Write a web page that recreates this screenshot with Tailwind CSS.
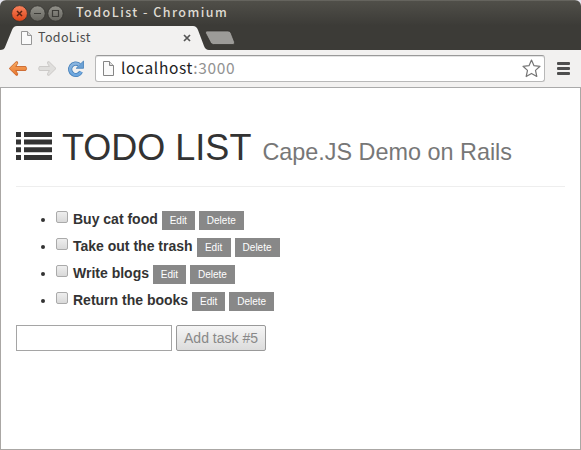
<!DOCTYPE html>
<html lang="en">
<head>
<meta charset="utf-8">
<title>TodoList</title>
<script src="https://cdn.jsdelivr.net/npm/@tailwindcss/browser@4"></script>
</head>
<body class="w-[581px] h-[450px] overflow-hidden bg-[#e4e4ee]">
<div class="relative flex flex-col w-[581px] h-[450px] overflow-hidden rounded-t-[6px] bg-white">
  <header class="flex flex-col h-[50px] shrink-0 border-t border-[#65645e] bg-linear-to-b from-[#504f49] to-[#3c3b37] to-50%">
    <div class="flex items-center h-[25px] pl-[11px]">
      <svg class="w-[54px] h-[18px] shrink-0" viewBox="0 0 54 18" fill="none">
        <defs>
          <linearGradient id="red" x2="0" y2="1"><stop stop-color="#f8835d"/><stop offset="1" stop-color="#dd4418"/></linearGradient>
          <linearGradient id="gry" x2="0" y2="1"><stop stop-color="#92918a"/><stop offset="1" stop-color="#66655f"/></linearGradient>
        </defs>
        <circle cx="8.500" cy="8.500" r="7.900" fill="url(#red)" stroke="#33322e" stroke-width=".8"/>
        <circle cx="26.500" cy="8.500" r="7.700" fill="url(#gry)" stroke="#33322e" stroke-width=".8"/>
        <circle cx="44.500" cy="8.500" r="7.700" fill="url(#gry)" stroke="#33322e" stroke-width=".8"/>
        <path d="M6 6l5 5M11 6l-5 5" stroke="#5a2413" stroke-width="1.500"/>
        <path d="M23 8.500h7M41.500 5.500h6v6h-6z" stroke="#3c3b37" stroke-width="1.200"/>
      </svg>
      <span class="ml-[11px] -mt-[3px] whitespace-nowrap text-[12.5px] leading-[18px] tracking-[1.45px] font-medium text-[#dfdbd2] font-['Noto_Sans_CJK_JP',sans-serif]">TodoList - Chromium</span>
    </div>
    <div class="flex h-[24px]">
      <div class="relative w-[209px] h-[24px]">
        <svg class="absolute inset-0 w-[209px] h-[24px]" viewBox="0 0 209 24"><path d="M0 24C3 24 4.500 23 5.500 20L12 4Q13.500 0 17 0H193Q196.500 0 198 4L204 20Q205.500 24 209 24Z" fill="#f2f1f0"/></svg>
        <div class="relative flex items-center h-[24px] pl-[20px]">
          <svg class="w-[13px] h-[15px]" viewBox="0 0 13 15"><path d="M1.500 .5h6l4 4v9h-10z" fill="#fafafa" stroke="#969696"/><path d="M7.500 .5v4h4" fill="#ddd" stroke="#969696"/></svg>
          <span class="ml-[5px] -mt-[3px] w-[140px] whitespace-nowrap text-[12.5px] leading-[18px] tracking-[.35px] text-[#4c4c4c] font-['Noto_Sans_CJK_JP',sans-serif]">TodoList</span>
          <svg class="ml-[5px] w-[8px] h-[8px]" viewBox="0 0 8 8"><path d="M1 1l6 6M7 1L1 7" stroke="#555" stroke-width="1.700"/></svg>
        </div>
      </div>
      <svg class="-ml-[5px] mt-[4px] w-[32px] h-[16px]" viewBox="0 0 32 16"><path d="M3 1H24Q26 1 27 3L30.500 12Q31 14.500 29 14.500H9.500Q7.500 14.500 6.500 12.500L1.500 3Q1 1 3 1Z" fill="#9c9b98" stroke="#302f2b" stroke-width=".7"/></svg>
    </div>
  </header>
  <nav class="flex items-center h-[38px] shrink-0 bg-[#f2f1f0] border-b border-[#aaa] pl-[8px]">
    <svg class="w-[78px] h-[20px]" viewBox="0 0 78 20" fill="none">
      <defs>
        <linearGradient id="org" x2="0" y2="1"><stop stop-color="#f8ac63"/><stop offset="1" stop-color="#e7752c"/></linearGradient>
        <linearGradient id="blu" x2="0" y2="1"><stop stop-color="#8ab5df"/><stop offset="1" stop-color="#6ba6df"/></linearGradient>
      </defs>
      <path d="M1.200 9.500L8 2.800Q10 2 9.700 4.300L7.800 7.500H17.800Q19.300 9.500 17.800 11.500H7.800L9.700 14.700Q10 17 8 16.200Z" fill="url(#org)" stroke="#c9652b" stroke-width=".9" stroke-linejoin="round"/>
      <path d="M48 9.500L41.200 2.800Q39.200 2 39.500 4.300L41.400 7.500H31.400Q29.900 9.500 31.400 11.500H41.400L39.500 14.700Q39.200 17 41.200 16.200Z" fill="#dfdedc" stroke="#c8c6c4" stroke-width=".9" stroke-linejoin="round"/>
      <path d="M73 12.700A5.700 5.700 0 1 1 71.500 5.900" stroke="#4680b9" stroke-width="4.200"/>
      <path d="M75.500 2V9.300H68.200Z" fill="#6ba1d5" stroke="#4680b9" stroke-width=".8"/>
      <path d="M73 12.700A5.700 5.700 0 1 1 71.500 5.900" stroke="url(#blu)" stroke-width="2.600"/>
    </svg>
    <div class="flex items-center ml-[9px] w-[450px] h-[27px] rounded-[3px] border border-[#b8b8b8] border-t-[#999] bg-white pl-[6px] shadow-[inset_0_1px_0_#e4e4e4]">
      <svg class="w-[13px] h-[16px]" viewBox="0 0 13 16"><path d="M1.500 .5h6l4 4v10h-10z" fill="#fafafa" stroke="#858585"/><path d="M7.500 .5v4h4" fill="#ddd" stroke="#858585"/></svg>
      <span class="ml-[6px] -mt-[3px] w-[401px] whitespace-nowrap text-[15.5px] leading-[22px] tracking-[.65px] text-[#222] font-['Noto_Sans_CJK_JP',sans-serif]">localhost<span class="text-[#929292]">:3000</span></span>
      <svg class="w-[19px] h-[19px]" viewBox="0 0 19 19"><path d="M9.500 1L12 6.700L18 7.300L13.500 11.400L14.800 17.500L9.500 14.400L4.200 17.500L5.500 11.400L1 7.300L7 6.700Z" fill="#fff" stroke="#757575" stroke-width="1.200" stroke-linejoin="round"/></svg>
    </div>
    <div class="flex flex-col gap-[2px] ml-[12px]">
      <i class="w-[13px] h-[3px] rounded-[1px] bg-[#4e4e4e]"></i><i class="w-[13px] h-[3px] rounded-[1px] bg-[#4e4e4e]"></i><i class="w-[13px] h-[3px] rounded-[1px] bg-[#4e4e4e]"></i>
    </div>
  </nav>
  <main class="flex-1 border-x border-b border-[#aaa7a4] bg-white px-[15px] font-['Liberation_Sans',Arial,sans-serif] text-[14px] leading-5 text-[#333]">
    <h1 class="flex items-baseline h-[99px] pt-[40px] border-b border-[#eee] text-[36px] leading-[40px] whitespace-nowrap">
      <svg class="w-[36px] h-[28px] shrink-0" viewBox="0 0 36 28" fill="#333"><path d="M0 0h5v5H0zM8 0h28v5H8zM0 7.500h5v5H0zM8 7.500h28v5H8zM0 15.300h5v5H0zM8 15.300h28v5H8zM0 23h5v5H0zM8 23h28v5H8z"/></svg>
      <span class="ml-[10px]">TODO LIST</span>
      <small class="ml-[11px] text-[23.4px] text-[#777]">Cape.JS Demo on Rails</small>
    </h1>
    <ul class="mt-[19px] pl-[24px]">
      <li class="flex items-center h-[27px]"><i class="w-[4px] h-[4px] ml-px mr-[11px] rounded-full bg-[#333]"></i><span class="w-[12px] h-[12px] -mt-[5px] rounded-[2px] border border-[#aaa] bg-linear-to-b from-[#eee] to-[#d9d9d9]"></span><b class="ml-[5px] mr-[4px] -mt-px">Buy cat food</b><button class="w-[33px] h-[19px] mt-px mr-[4px] bg-[#888] text-white text-[10px] leading-[19px]">Edit</button><button class="w-[45px] h-[19px] mt-px bg-[#888] text-white text-[10px] leading-[19px]">Delete</button></li>
      <li class="flex items-center h-[27px]"><i class="w-[4px] h-[4px] ml-px mr-[11px] rounded-full bg-[#333]"></i><span class="w-[12px] h-[12px] -mt-[5px] rounded-[2px] border border-[#aaa] bg-linear-to-b from-[#eee] to-[#d9d9d9]"></span><b class="ml-[5px] mr-[4px] -mt-px">Take out the trash</b><button class="w-[34px] h-[19px] mt-px mr-[4px] bg-[#888] text-white text-[10px] leading-[19px]">Edit</button><button class="w-[45px] h-[19px] mt-px bg-[#888] text-white text-[10px] leading-[19px]">Delete</button></li>
      <li class="flex items-center h-[27px]"><i class="w-[4px] h-[4px] ml-px mr-[11px] rounded-full bg-[#333]"></i><span class="w-[12px] h-[12px] -mt-[5px] rounded-[2px] border border-[#aaa] bg-linear-to-b from-[#eee] to-[#d9d9d9]"></span><b class="ml-[5px] mr-[4px] -mt-px">Write blogs</b><button class="w-[33px] h-[19px] mt-px mr-[4px] bg-[#888] text-white text-[10px] leading-[19px]">Edit</button><button class="w-[45px] h-[19px] mt-px bg-[#888] text-white text-[10px] leading-[19px]">Delete</button></li>
      <li class="flex items-center h-[27px]"><i class="w-[4px] h-[4px] ml-px mr-[11px] rounded-full bg-[#333]"></i><span class="w-[12px] h-[12px] -mt-[5px] rounded-[2px] border border-[#aaa] bg-linear-to-b from-[#eee] to-[#d9d9d9]"></span><b class="ml-[5px] mr-[4px] -mt-px">Return the books</b><button class="w-[33px] h-[19px] mt-px mr-[4px] bg-[#888] text-white text-[10px] leading-[19px]">Edit</button><button class="w-[45px] h-[19px] mt-px bg-[#888] text-white text-[10px] leading-[19px]">Delete</button></li>
    </ul>
    <form class="flex gap-[4px] mt-[11px]">
      <input type="text" class="w-[156px] h-[26px] border border-[#a5a5a5] bg-white">
      <button type="button" class="w-[90px] h-[26px] rounded-[2px] border border-[#999] bg-linear-to-b from-[#f5f5f5] to-[#dcdcdc] text-[14px] leading-[24px] text-[#888] whitespace-nowrap">Add task #5</button>
    </form>
  </main>
</div>
</body>
</html>
